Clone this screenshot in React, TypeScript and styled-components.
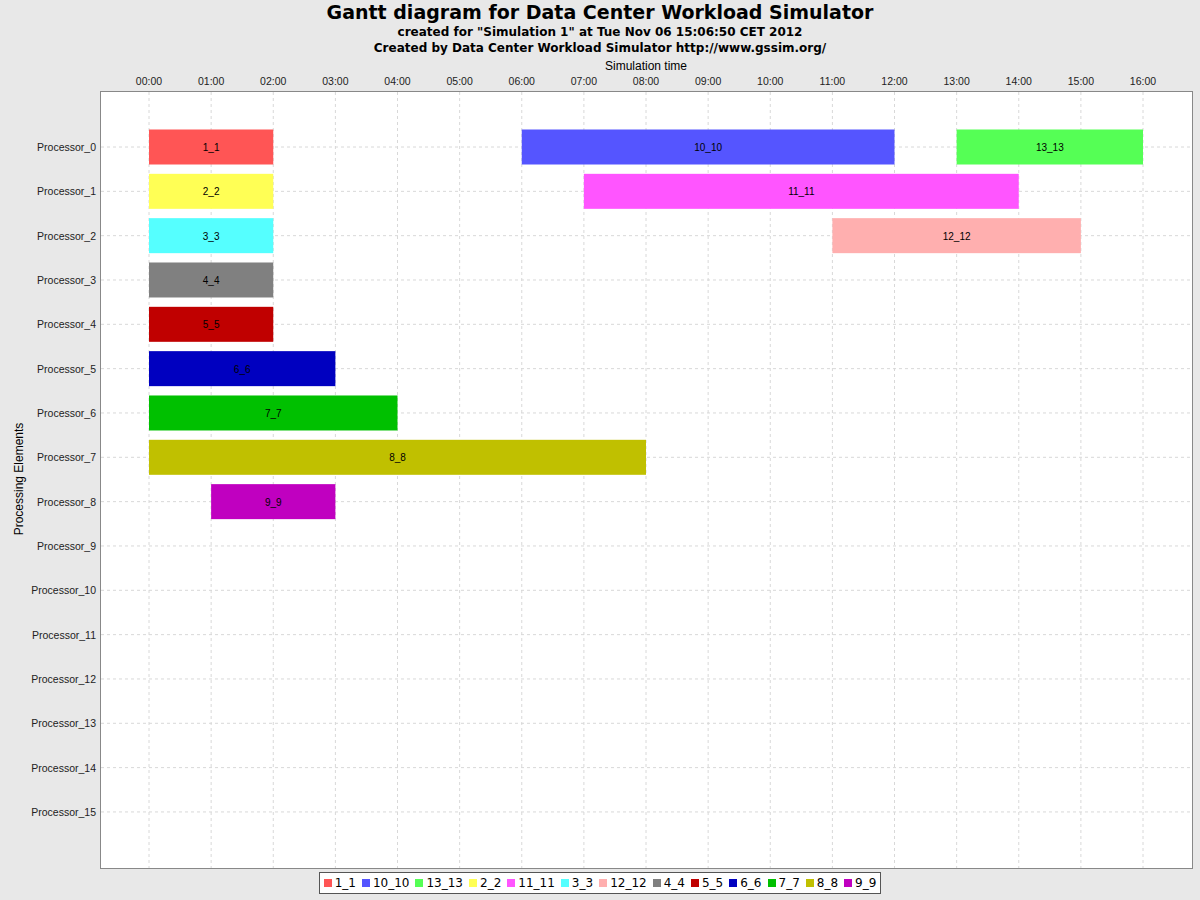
import styled, { createGlobalStyle } from 'styled-components';

const Global = createGlobalStyle`
  html, body { margin: 0; padding: 0; background: #e8e8e8; }
  body { font-family: "Liberation Sans", Arial, sans-serif; }
`;

const HOUR = 62.125;
const X0 = 149;
const ROW0 = 151;
const ROW = 44.33;

type Task = { id: string; row: number; start: number; end: number; color: string };

const tasks: Task[] = [
  { id: '1_1', row: 0, start: 0, end: 2, color: '#ff5555' },
  { id: '10_10', row: 0, start: 6, end: 12, color: '#5555ff' },
  { id: '13_13', row: 0, start: 13, end: 16, color: '#55ff55' },
  { id: '2_2', row: 1, start: 0, end: 2, color: '#ffff55' },
  { id: '11_11', row: 1, start: 7, end: 14, color: '#ff55ff' },
  { id: '3_3', row: 2, start: 0, end: 2, color: '#55ffff' },
  { id: '12_12', row: 2, start: 11, end: 15, color: '#ffafaf' },
  { id: '4_4', row: 3, start: 0, end: 2, color: '#808080' },
  { id: '5_5', row: 4, start: 0, end: 2, color: '#c00000' },
  { id: '6_6', row: 5, start: 0, end: 3, color: '#0000c0' },
  { id: '7_7', row: 6, start: 0, end: 4, color: '#00c000' },
  { id: '8_8', row: 7, start: 0, end: 8, color: '#c0c000' },
  { id: '9_9', row: 8, start: 1, end: 3, color: '#c000c0' },
];

const legendOrder = ['1_1', '10_10', '13_13', '2_2', '11_11', '3_3', '12_12', '4_4', '5_5', '6_6', '7_7', '8_8', '9_9'];

const Page = styled.div`
  width: 1200px;
  height: 900px;
  display: flex;
  flex-direction: column;
  align-items: center;
  background: #e8e8e8;
  color: #000;
  overflow: hidden;
`;

const Title = styled.div`
  font-family: "DejaVu Sans", sans-serif;
  font-weight: bold;
  font-size: 19px;
  line-height: 24px;
  margin-top: 0px;
`;

const Subtitle = styled.div`
  font-family: "DejaVu Sans", sans-serif;
  font-weight: bold;
  font-size: 12px;
  line-height: 16px;
`;

const Chart = styled.svg`
  display: block;
  font-family: "Liberation Sans", Arial, sans-serif;
`;

const Legend = styled.div`
  display: flex;
  gap: 6px;
  align-items: center;
  border: 1px solid #555;
  background: #fff;
  height: 20px;
  padding: 0 4px;
  margin-top: 1px;
  font-family: "DejaVu Sans", sans-serif;
  font-size: 12px;
`;

const LegendItem = styled.span`
  display: flex;
  align-items: center;
  gap: 3px;
`;

const Swatch = styled.span<{ $c: string }>`
  width: 8px;
  height: 8px;
  background: ${({ $c }) => $c};
`;

export default function App() {
  const top = 60; // svg origin in page coords
  const y = (v: number) => v - top;
  const rows = Array.from({ length: 16 }, (_, i) => i);
  const hours = Array.from({ length: 17 }, (_, i) => i);
  const colorOf = (id: string) => tasks.find((t) => t.id === id)!.color;

  return (
    <Page>
      <Global />
      <Title>Gantt diagram for Data Center Workload Simulator</Title>
      <Subtitle>created for "Simulation 1" at Tue Nov 06 15:06:50 CET 2012</Subtitle>
      <Subtitle>Created by Data Center Workload Simulator http://www.gssim.org/</Subtitle>
      <Chart width={1200} height={815} viewBox="0 0 1200 815">
        <text x={646} y={y(74)} fontSize={12} textAnchor="middle">Simulation time</text>
        {hours.map((h) => (
          <text key={h} x={X0 + h * HOUR} y={y(89)} fontSize={10.5} textAnchor="middle" fill="#222">
            {String(h).padStart(2, '0')}:00
          </text>
        ))}
        <rect x={100.5} y={y(95.5)} width={1092} height={777} fill="#fff" stroke="#888" />
        {hours.map((h) => (
          <line key={h} x1={X0 + h * HOUR} x2={X0 + h * HOUR} y1={y(96)} y2={y(872)} stroke="#d8d8d8" strokeDasharray="3 3" />
        ))}
        {rows.map((r) => (
          <line key={r} x1={101} x2={1192} y1={ROW0 + r * ROW} y2={ROW0 + r * ROW} transform={`translate(0 ${-top})`} stroke="#d8d8d8" strokeDasharray="3 3" />
        ))}
        {rows.map((r) => (
          <text key={r} x={96} y={y(ROW0 + r * ROW + 4)} fontSize={10.5} textAnchor="end" fill="#222">
            Processor_{r}
          </text>
        ))}
        <text transform={`translate(23 ${y(483)}) rotate(-90)`} fontSize={12} textAnchor="middle">Processing Elements</text>
        {tasks.map((t) => {
          const x1 = X0 + t.start * HOUR;
          const x2 = X0 + t.end * HOUR;
          const cy = y(ROW0 + t.row * ROW);
          return (
            <g key={t.id}>
              <rect x={x1} y={cy - 17.5} width={x2 - x1} height={35} fill={t.color} />
              <text x={(x1 + x2) / 2} y={cy + 4} fontSize={10} textAnchor="middle" fill="#000">{t.id}</text>
            </g>
          );
        })}
      </Chart>
      <Legend>
        {legendOrder.map((id) => (
          <LegendItem key={id}>
            <Swatch $c={colorOf(id)} />
            {id}
          </LegendItem>
        ))}
      </Legend>
    </Page>
  );
}
